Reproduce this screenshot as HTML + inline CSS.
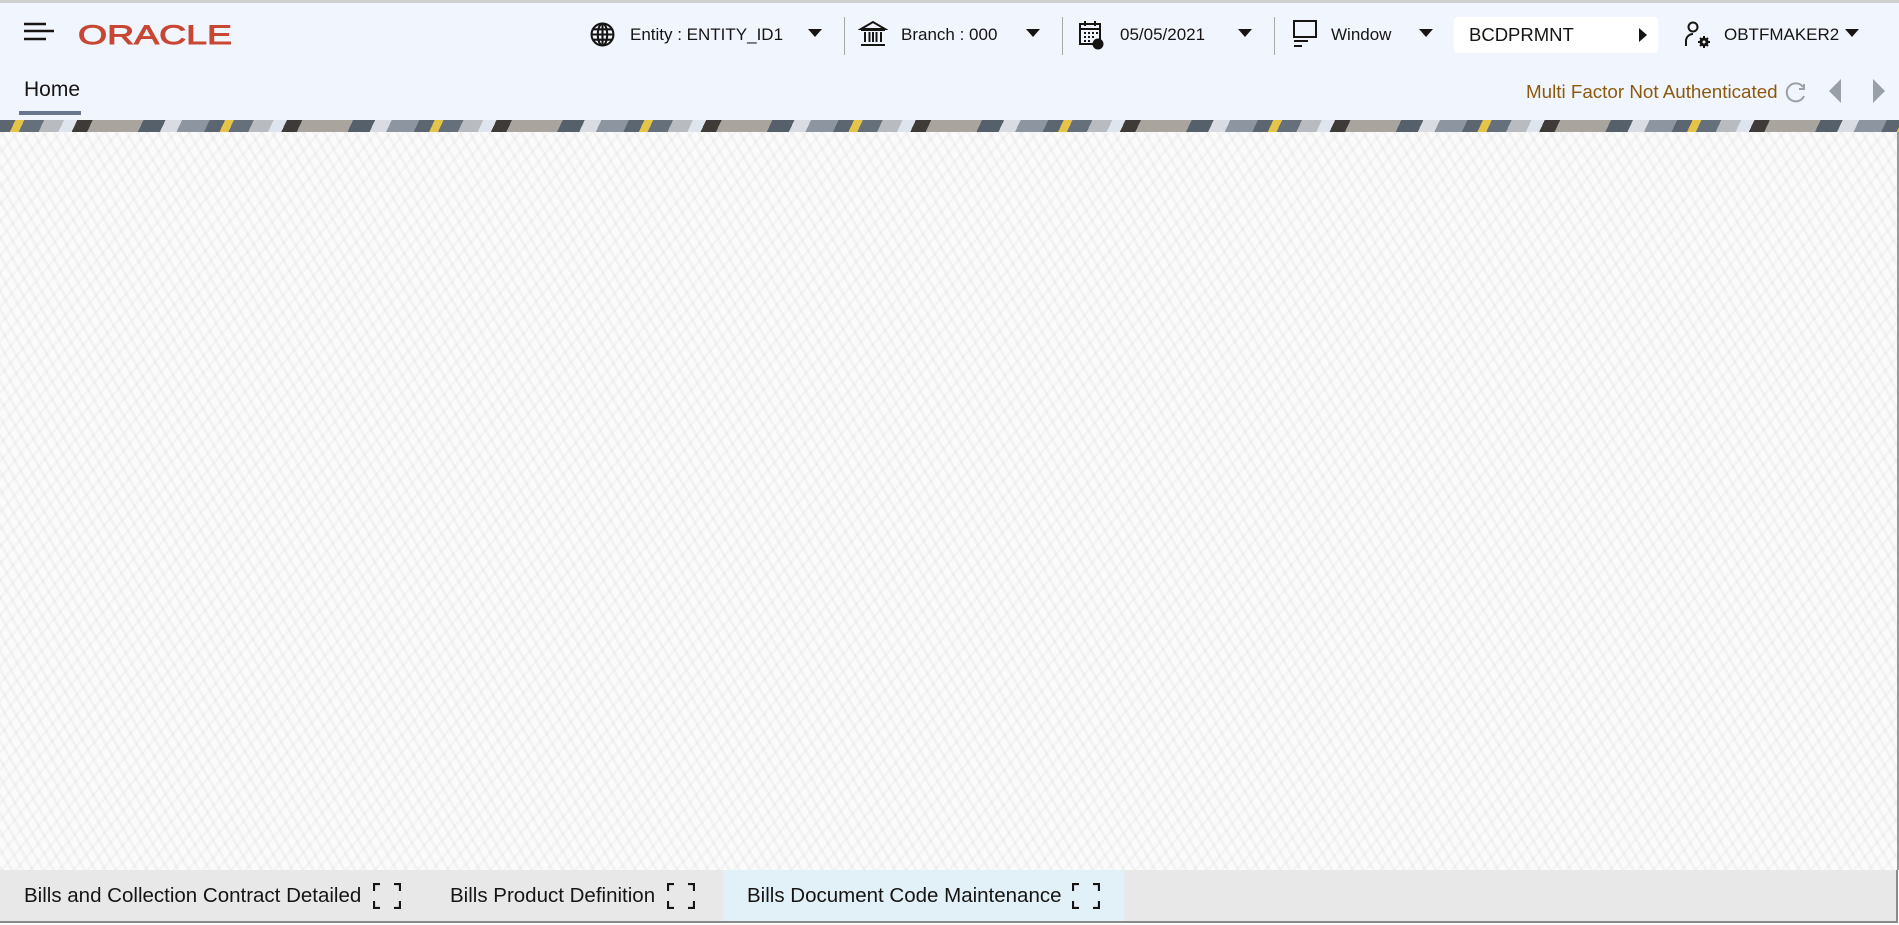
<!DOCTYPE html>
<html><head><meta charset="utf-8"><style>
*{margin:0;padding:0;box-sizing:border-box}
html,body{width:1899px;height:925px;overflow:hidden;background:#fff;font-family:"Liberation Sans",sans-serif;color:#161513}
.hdr{position:absolute;left:0;top:0;width:1899px;height:121px;background:#f1f5fd;border-top:3px solid #d0d0d0}
.t{position:absolute;font-size:17px;line-height:20px;white-space:nowrap}
.arr{position:absolute;width:0;height:0;border-left:7px solid transparent;border-right:7px solid transparent;border-top:8px solid #161513}
.div{position:absolute;top:14px;width:1px;height:38px;background:#a8a8a8}
.banner{position:absolute;left:0;top:120px;width:1899px;height:12px;
background:repeating-linear-gradient(115deg,#5c6670 0 14px,#e5c44a 14px 22px,#66707a 22px 40px,#b8bcc0 40px 58px,#dfe5ee 58px 70px,#3d3a38 70px 84px,#a9a49e 84px 130px,#56606a 130px 150px,#d9dde3 150px 165px,#8d96a0 165px 190px)}
.body{position:absolute;left:0;top:132px;width:1899px;height:738px;background-color:#fbfbfb;
background-image:repeating-linear-gradient(60deg,rgba(0,0,0,0.03) 0 3px,transparent 3px 9px),repeating-linear-gradient(-50deg,rgba(0,0,0,0.025) 0 3px,transparent 3px 11px)}
.bar{position:absolute;left:0;top:870px;width:1898px;height:53px;background:#e8e8e8;border-bottom:2px solid #8a8a8a;border-right:2px solid #8a8a8a}
.tab{position:absolute;top:0;height:51px;font-size:20.5px;line-height:51px;white-space:nowrap}
.rb{position:absolute;right:0;top:132px;width:2px;height:738px;background:#9a9a9a}
</style></head><body>
<div class="hdr">
 <svg style="position:absolute;left:24px;top:19px" width="30" height="24"><path d="M0 2h22M0 9h30M0 17h22" stroke="#161513" stroke-width="2.4"/></svg>
 <svg style="position:absolute;left:77px;top:20px" width="160" height="26"><text x="1" y="21" font-family="Liberation Sans" font-size="27" fill="#c74634" stroke="#c74634" stroke-width="0.9" textLength="154" lengthAdjust="spacingAndGlyphs">ORACLE</text></svg>

 <svg style="position:absolute;left:590px;top:19px" width="25" height="25" viewBox="0 0 24 24" fill="none" stroke="#161513" stroke-width="2"><circle cx="12" cy="12" r="10.5"/><ellipse cx="12" cy="12" rx="4.5" ry="10.5"/><path d="M1.5 12h21M3 7h18M3 17h18M12 1.5v21"/></svg>
 <div class="t" style="left:630px;top:22px">Entity : ENTITY_ID1</div>
 <div class="arr" style="left:808px;top:26px"></div>
 <div class="div" style="left:844px"></div>

 <svg style="position:absolute;left:858px;top:16px" width="30" height="30" viewBox="0 0 30 30" fill="none" stroke="#161513" stroke-width="2"><path d="M3 10L15 3l12 7z"/><path d="M3 11h24M7 13v10M11.5 13v10M15 13v10M18.5 13v10M23 13v10M3 26h24"/></svg>
 <div class="t" style="left:901px;top:22px">Branch : 000</div>
 <div class="arr" style="left:1026px;top:26px"></div>
 <div class="div" style="left:1062px"></div>

 <svg style="position:absolute;left:1078px;top:16px" width="26" height="32" viewBox="0 0 26 32" fill="none" stroke="#161513" stroke-width="2"><rect x="2" y="5" width="20" height="20"/><path d="M7 2v5M17 2v5M2 10h20"/><path d="M6 14h2M10 14h2M14 14h2M18 14h2M6 18h2M10 18h2M14 18h2M6 22h2M10 22h2"/><circle cx="20" cy="25" r="4.5" fill="#161513"/></svg>
 <div class="t" style="left:1120px;top:22px">05/05/2021</div>
 <div class="arr" style="left:1238px;top:26px"></div>
 <div class="div" style="left:1274px"></div>

 <svg style="position:absolute;left:1292px;top:16px" width="26" height="32" viewBox="0 0 26 32" fill="none" stroke="#161513" stroke-width="2"><rect x="2" y="2" width="22" height="16"/><path d="M2 22h14M2 27h8"/></svg>
 <div class="t" style="left:1331px;top:22px">Window</div>
 <div class="arr" style="left:1419px;top:26px"></div>

 <div style="position:absolute;left:1454px;top:14px;width:204px;height:36px;background:#fff;border-radius:4px"></div>
 <div class="t" style="left:1469px;top:22px;font-size:18.5px">BCDPRMNT</div>
 <div style="position:absolute;left:1639px;top:25px;border-top:7px solid transparent;border-bottom:7px solid transparent;border-left:8px solid #161513"></div>

 <svg style="position:absolute;left:1684px;top:17px" width="30" height="30" viewBox="0 0 30 30" fill="none" stroke="#161513" stroke-width="2"><circle cx="9" cy="7" r="4.5"/><path d="M2 26v-5a7 7 0 0 1 7-7"/><circle cx="20" cy="22" r="3" stroke-width="3"/><path d="M20 16v2M20 26v2M14 22h2M24 22h2M16 18l1.5 1.5M22.5 24.5l1.5 1.5M16 26l1.5-1.5M22.5 19.5l1.5-1.5"/></svg>
 <div class="t" style="left:1724px;top:22px">OBTFMAKER2</div>
 <div class="arr" style="left:1845px;top:26px"></div>

 <div class="t" style="left:24px;top:75px;font-size:21px;line-height:24px">Home</div>
 <div style="position:absolute;left:19px;top:108px;width:62px;height:4px;background:#6a7590"></div>

 <div class="t" style="left:1526px;top:78px;color:#8b5a0f;font-size:18.8px;line-height:22px">Multi Factor Not Authenticated</div>
 <svg style="position:absolute;left:1784px;top:77px" width="24" height="24" viewBox="0 0 24 24" fill="none" stroke="#9aa0a8" stroke-width="2"><path d="M19 7A9 9 0 1 0 20 16"/><path d="M20 4v5h-5"/></svg>
 <div style="position:absolute;left:1829px;top:76px;border-top:12px solid transparent;border-bottom:12px solid transparent;border-right:12px solid #9aa0a8"></div>
 <div style="position:absolute;left:1873px;top:76px;border-top:12px solid transparent;border-bottom:12px solid transparent;border-left:12px solid #9aa0a8"></div>
</div>
<div class="banner"></div>
<div class="body"></div>
<div class="rb"></div>
<div class="bar">
 <div class="tab" style="left:24px">Bills and Collection Contract Detailed</div>
 <svg style="position:absolute;left:373px;top:13px" width="28" height="26" fill="none" stroke="#161513" stroke-width="2.2"><path d="M1 8V1h6M21 1h6v7M1 18v7h6M21 25h6v-7"/></svg>
 <div class="tab" style="left:450px">Bills Product Definition</div>
 <svg style="position:absolute;left:667px;top:13px" width="28" height="26" fill="none" stroke="#161513" stroke-width="2.2"><path d="M1 8V1h6M21 1h6v7M1 18v7h6M21 25h6v-7"/></svg>
 <div style="position:absolute;left:723px;top:0;width:401px;height:51px;background:#e2f0f7"></div>
 <div class="tab" style="left:747px">Bills Document Code Maintenance</div>
 <svg style="position:absolute;left:1072px;top:13px" width="28" height="26" fill="none" stroke="#161513" stroke-width="2.2"><path d="M1 8V1h6M21 1h6v7M1 18v7h6M21 25h6v-7"/></svg>
</div>
</body></html>
